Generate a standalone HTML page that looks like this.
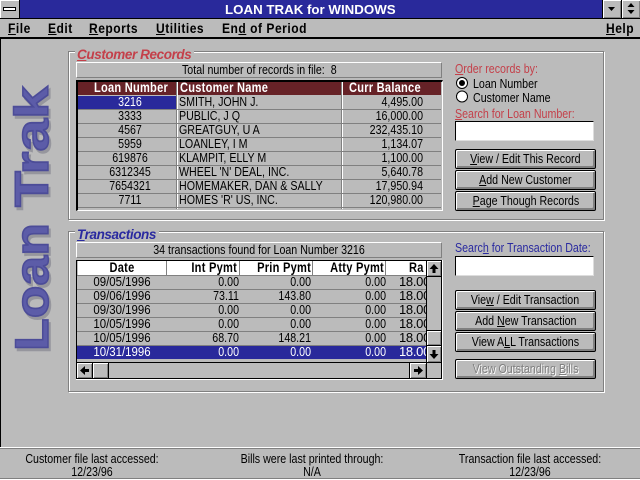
<!DOCTYPE html>
<html><head><meta charset="utf-8"><title>LOAN TRAK for WINDOWS</title>
<style>
html,body{margin:0;padding:0;background:#bbb}
#p{position:relative;width:640px;height:480px;overflow:hidden;background:#bbb;font:13px/14px "Liberation Sans",sans-serif;color:#000}
#p div{position:absolute;box-sizing:border-box;white-space:nowrap}
.m{top:20px;font:bold 14px/16px "Liberation Sans",sans-serif;letter-spacing:.6px;transform:scaleX(.86);transform-origin:0 0}
.group{border:1px solid #808080;box-shadow:1px 1px 0 #fff,inset 1px 1px 0 #fff}
.leg{font:italic bold 13.5px/14px "Liberation Sans",sans-serif;background:#bbb;padding:0 3px 0 2px;letter-spacing:-.4px}
.info{left:76px;width:366px;height:16px;border:1px solid;border-color:#fff #808080 #808080 #fff;text-align:center;line-height:14px}
.btn{left:455px;width:141px;height:20px;border:1px solid #000;border-radius:2px;background:#bbb;box-shadow:inset 1px 1px 0 #fff,inset -2px -2px 0 #808080;text-align:center;line-height:18px}
.s{display:inline-block;transform:scaleX(.82)}
.inp{left:455px;width:139px;height:20px;background:#fff;border:1px solid;border-color:#000 #ddd #ddd #000}
.h{font:bold 13.5px/14px "Liberation Sans",sans-serif;letter-spacing:.3px}
.l{transform:scaleX(.82);transform-origin:0 0}
.c{text-align:center;transform:scaleX(.82)}
.d{text-align:center;transform:scaleX(.88)}
.r{text-align:right;transform:scaleX(.82);transform-origin:100% 0}
.sb{background:#bbb;box-shadow:inset 1px 1px 0 #fff,inset -1px -1px 0 #808080}
.rl{height:1px;background:#808080}
.k{background:#000}
.red{color:#c4404a}.blue{color:#2a2aa0}
</style></head><body><div id="p">

<!-- title bar -->
<div style="left:0;top:0;width:640px;height:18px;background:#29299b"></div>
<div style="left:0;top:18px;width:640px;height:1px;background:#000"></div>
<div style="left:0;top:0;width:19px;height:18px;background:#bbb;box-shadow:inset 1px 1px 0 #fff"></div>
<div style="left:19px;top:0;width:1px;height:18px;background:#000"></div>
<div style="left:3px;top:7px;width:13px;height:4px;background:#fff;border:1px solid #000"></div>
<div style="left:225px;top:1px;width:170px;text-align:center;font:bold 13.300px/17px 'Liberation Sans',sans-serif;color:#fff">LOAN TRAK for WINDOWS</div>
<div style="left:602px;top:0;width:1px;height:18px;background:#000"></div>
<div style="left:603px;top:0;width:18px;height:18px;background:#bbb;box-shadow:inset 1px 1px 0 #fff,inset -1px -1px 0 #808080"></div>
<div style="left:621px;top:0;width:1px;height:18px;background:#000"></div>
<div style="left:622px;top:0;width:18px;height:18px;background:#bbb;box-shadow:inset 1px 1px 0 #fff,inset -1px -1px 0 #808080"></div>
<svg style="position:absolute;left:603px;top:0" width="37" height="18"><path d="M5 7h7l-3.500 4zM28 3l3.500 4h-7zM24.500 10h7l-3.500 4z" fill="#000"/></svg>

<!-- menu -->
<div class="m" style="left:8px"><u>F</u>ile</div>
<div class="m" style="left:48px"><u>E</u>dit</div>
<div class="m" style="left:89px"><u>R</u>eports</div>
<div class="m" style="left:156px"><u>U</u>tilities</div>
<div class="m" style="left:222px">En<u>d</u> of Period</div>
<div class="m" style="left:606px"><u>H</u>elp</div>
<div style="left:0;top:37px;width:640px;height:2px;background:#000"></div>
<div style="left:0;top:39px;width:1px;height:408px;background:#000"></div>

<!-- logo -->
<svg style="position:absolute;left:0;top:70px" width="66" height="300" font-family="Liberation Sans" font-weight="bold" font-size="47" stroke-width="1.500"><g fill="#8a8a94" stroke="#8a8a94" opacity=".75"><text transform="translate(50 284) rotate(-90) scale(1.140 1)">Loan</text><text transform="translate(50 140) rotate(-90) scale(1.250 1)">Trak</text></g><g fill="#5c5ca8" stroke="#4c4c98"><text transform="translate(48 281) rotate(-90) scale(1.140 1)">Loan</text><text transform="translate(48 137) rotate(-90) scale(1.250 1)">Trak</text></g></svg>

<!-- customer group -->
<div class="group" style="left:68px;top:51px;width:536px;height:169px"></div>
<div class="leg red" style="left:75px;top:48px"><u>C</u>ustomer Records</div>
<div class="info" style="top:62px"><span class="s">Total number of records in file:&nbsp; 8</span></div>

<div style="left:76px;top:80px;width:367px;height:131px;background:#bbb;border-left:2px solid #000;border-top:2px solid #000;border-right:1px solid #fff;border-bottom:1px solid #fff"></div>
<div style="left:78px;top:82px;width:363px;height:13px;background:#662227"></div>
<div style="left:176px;top:82px;width:1px;height:127px;background:#808080"></div><div style="left:177px;top:82px;width:1px;height:127px;background:#fff"></div>
<div style="left:341px;top:82px;width:1px;height:127px;background:#808080"></div><div style="left:342px;top:82px;width:1px;height:127px;background:#fff"></div>
<div class="h c" style="left:82px;top:81px;width:98px;color:#fff">Loan Number</div>
<div class="h l" style="left:180px;top:81px;color:#fff">Customer Name</div>
<div class="h l" style="left:349px;top:81px;color:#fff">Curr Balance</div>
<div style="left:78px;top:96px;width:98px;height:13px;background:#29299b"></div>
<div class="rl" style="left:78px;top:109px;width:363px"></div><div class="rl" style="left:78px;top:123px;width:363px"></div><div class="rl" style="left:78px;top:137px;width:363px"></div><div class="rl" style="left:78px;top:151px;width:363px"></div><div class="rl" style="left:78px;top:165px;width:363px"></div><div class="rl" style="left:78px;top:179px;width:363px"></div><div class="rl" style="left:78px;top:193px;width:363px"></div><div class="rl" style="left:78px;top:207px;width:363px"></div>

<div class="c" style="left:81px;top:95px;width:98px;color:#fff">3216</div><div class="l" style="left:179px;top:95px">SMITH, JOHN J.</div><div class="r" style="left:343px;top:95px;width:80px">4,495.00</div>
<div class="c" style="left:81px;top:109px;width:98px">3333</div><div class="l" style="left:179px;top:109px">PUBLIC, J Q</div><div class="r" style="left:343px;top:109px;width:80px">16,000.00</div>
<div class="c" style="left:81px;top:123px;width:98px">4567</div><div class="l" style="left:179px;top:123px">GREATGUY, U A</div><div class="r" style="left:343px;top:123px;width:80px">232,435.10</div>
<div class="c" style="left:81px;top:137px;width:98px">5959</div><div class="l" style="left:179px;top:137px">LOANLEY, I M</div><div class="r" style="left:343px;top:137px;width:80px">1,134.07</div>
<div class="c" style="left:81px;top:151px;width:98px">619876</div><div class="l" style="left:179px;top:151px">KLAMPIT, ELLY M</div><div class="r" style="left:343px;top:151px;width:80px">1,100.00</div>
<div class="c" style="left:81px;top:165px;width:98px">6312345</div><div class="l" style="left:179px;top:165px">WHEEL 'N' DEAL, INC.</div><div class="r" style="left:343px;top:165px;width:80px">5,640.78</div>
<div class="c" style="left:81px;top:179px;width:98px">7654321</div><div class="l" style="left:179px;top:179px">HOMEMAKER, DAN &amp; SALLY</div><div class="r" style="left:343px;top:179px;width:80px">17,950.94</div>
<div class="c" style="left:81px;top:193px;width:98px">7711</div><div class="l" style="left:179px;top:193px">HOMES 'R' US, INC.</div><div class="r" style="left:343px;top:193px;width:80px">120,980.00</div>

<!-- right side customers -->
<div class="red l" style="left:455px;top:62px"><u>O</u>rder records by:</div>
<svg style="position:absolute;left:455px;top:75px" width="15" height="30"><circle cx="7" cy="8" r="5.500" fill="#fff" stroke="#000"/><circle cx="7" cy="8" r="3" fill="#000"/><circle cx="7" cy="21.500" r="5.500" fill="#fff" stroke="#000"/></svg>
<div class="l" style="left:473px;top:77px">Loan Number</div>
<div class="l" style="left:473px;top:91px">Customer Name</div>
<div class="red l" style="left:455px;top:107px"><u>S</u>earch for Loan Number:</div>
<div class="inp" style="top:121px"></div>
<div class="btn" style="top:149px"><span class="s"><u>V</u>iew / Edit This Record</span></div>
<div class="btn" style="top:170px"><span class="s"><u>A</u>dd New Customer</span></div>
<div class="btn" style="top:191px"><span class="s"><u>P</u>age Though Records</span></div>

<!-- transactions group -->
<div class="group" style="left:68px;top:231px;width:536px;height:161px"></div>
<div class="leg blue" style="left:75px;top:228px"><u>T</u>ransactions</div>
<div class="info" style="top:242px"><span class="s">34 transactions found for Loan Number 3216</span></div>

<div style="left:76px;top:260px;width:367px;height:120px;background:#bbb;border-right:1px solid #fff;border-bottom:1px solid #fff"></div>
<div class="k" style="left:76px;top:260px;width:366px;height:1px"></div>
<div class="k" style="left:76px;top:260px;width:1px;height:119px"></div>
<div class="k" style="left:441px;top:260px;width:1px;height:119px"></div>
<div class="k" style="left:76px;top:378px;width:366px;height:1px"></div>
<div style="left:78px;top:261px;width:348px;height:14px;background:#fff"></div>
<div class="rl" style="left:77px;top:275px;width:349px"></div>
<div style="left:166px;top:261px;width:1px;height:14px;background:#808080"></div><div style="left:239px;top:261px;width:1px;height:14px;background:#808080"></div><div style="left:312px;top:261px;width:1px;height:14px;background:#808080"></div><div style="left:385px;top:261px;width:1px;height:14px;background:#808080"></div>
<div class="h c" style="left:78px;top:261px;width:88px">Date</div>
<div class="h r" style="left:168px;top:261px;width:69px">Int Pymt</div>
<div class="h r" style="left:241px;top:261px;width:70px">Prin Pymt</div>
<div class="h r" style="left:314px;top:261px;width:70px">Atty Pymt</div>
<div class="h l" style="left:409px;top:261px">Ra</div>

<div style="left:77px;top:346px;width:349px;height:13px;background:#29299b"></div>
<div class="rl" style="left:77px;top:289px;width:349px"></div><div class="rl" style="left:77px;top:303px;width:349px"></div><div class="rl" style="left:77px;top:317px;width:349px"></div><div class="rl" style="left:77px;top:331px;width:349px"></div><div class="rl" style="left:77px;top:345px;width:349px"></div>

<div class="d" style="left:78px;top:275px;width:88px">09/05/1996</div><div class="r" style="left:168px;top:275px;width:71px">0.00</div><div class="r" style="left:241px;top:275px;width:70px">0.00</div><div class="r" style="left:314px;top:275px;width:72px">0.00</div><div style="left:399px;top:275px;width:27px;overflow:hidden;letter-spacing:-.3px">18.00</div>
<div class="d" style="left:78px;top:289px;width:88px">09/06/1996</div><div class="r" style="left:168px;top:289px;width:71px">73.11</div><div class="r" style="left:241px;top:289px;width:70px">143.80</div><div class="r" style="left:314px;top:289px;width:72px">0.00</div><div style="left:399px;top:289px;width:27px;overflow:hidden;letter-spacing:-.3px">18.00</div>
<div class="d" style="left:78px;top:303px;width:88px">09/30/1996</div><div class="r" style="left:168px;top:303px;width:71px">0.00</div><div class="r" style="left:241px;top:303px;width:70px">0.00</div><div class="r" style="left:314px;top:303px;width:72px">0.00</div><div style="left:399px;top:303px;width:27px;overflow:hidden;letter-spacing:-.3px">18.00</div>
<div class="d" style="left:78px;top:317px;width:88px">10/05/1996</div><div class="r" style="left:168px;top:317px;width:71px">0.00</div><div class="r" style="left:241px;top:317px;width:70px">0.00</div><div class="r" style="left:314px;top:317px;width:72px">0.00</div><div style="left:399px;top:317px;width:27px;overflow:hidden;letter-spacing:-.3px">18.00</div>
<div class="d" style="left:78px;top:331px;width:88px">10/05/1996</div><div class="r" style="left:168px;top:331px;width:71px">68.70</div><div class="r" style="left:241px;top:331px;width:70px">148.21</div><div class="r" style="left:314px;top:331px;width:72px">0.00</div><div style="left:399px;top:331px;width:27px;overflow:hidden;letter-spacing:-.3px">18.00</div>
<div class="d" style="left:78px;top:345px;width:88px;color:#fff">10/31/1996</div><div class="r" style="left:168px;top:345px;width:71px;color:#fff">0.00</div><div class="r" style="left:241px;top:345px;width:70px;color:#fff">0.00</div><div class="r" style="left:314px;top:345px;width:72px;color:#fff">0.00</div><div style="left:399px;top:345px;width:27px;overflow:hidden;letter-spacing:-.3px;color:#fff">18.00</div>

<!-- scrollbars -->
<div style="left:77px;top:359px;width:349px;height:3px;background:#bbb"></div>
<div class="k" style="left:77px;top:362px;width:364px;height:1px"></div>
<div class="k" style="left:426px;top:261px;width:1px;height:117px"></div>
<div style="left:427px;top:261px;width:14px;height:101px;background:#bbb"></div>
<div class="sb" style="left:427px;top:261px;width:14px;height:15px"></div>
<div class="k" style="left:427px;top:276px;width:14px;height:1px"></div>
<div class="k" style="left:427px;top:330px;width:14px;height:1px"></div>
<div class="sb" style="left:427px;top:331px;width:14px;height:14px"></div>
<div class="k" style="left:427px;top:345px;width:14px;height:1px"></div>
<div class="sb" style="left:427px;top:346px;width:14px;height:16px"></div>
<div class="sb" style="left:77px;top:363px;width:15px;height:15px"></div>
<div class="k" style="left:92px;top:363px;width:1px;height:15px"></div>
<div class="sb" style="left:93px;top:363px;width:15px;height:15px"></div>
<div class="k" style="left:108px;top:363px;width:1px;height:15px"></div>
<div class="k" style="left:409px;top:363px;width:1px;height:15px"></div>
<div class="sb" style="left:410px;top:363px;width:16px;height:15px"></div>
<svg style="position:absolute;left:0;top:0" width="640" height="480"><path d="M434 264l4.500 5h-3v4h-3v-4h-3zM434 359l4.500-5h-3v-4h-3v4h-3zM80 370.500l5-4.500v3h4v3h-4v3zM423 370.500l-5-4.500v3h-4v3h4v3z" fill="#000"/></svg>

<!-- right side transactions -->
<div class="blue l" style="left:455px;top:241px">Searc<u>h</u> for Transaction Date:</div>
<div class="inp" style="top:256px"></div>
<div class="btn" style="top:290px"><span class="s">Vie<u>w</u> / Edit Transaction</span></div>
<div class="btn" style="top:311px"><span class="s">Add <u>N</u>ew Transaction</span></div>
<div class="btn" style="top:332px"><span class="s">View A<u>L</u>L Transactions</span></div>
<div class="btn" style="top:359px;color:#808080;text-shadow:1px 1px 0 #fff"><span class="s">View Outstanding <u>B</u>ills</span></div>

<!-- status -->
<div style="left:0;top:447px;width:640px;height:1px;background:#fff"></div>
<div style="left:0;top:448px;width:640px;height:1px;background:#808080"></div>
<div style="left:0;top:478px;width:640px;height:1px;background:#808080"></div>
<div style="left:0;top:479px;width:640px;height:1px;background:#fff"></div>
<div class="c" style="left:0;top:452px;width:184px;line-height:13px">Customer file last accessed:<br>12/23/96</div>
<div class="c" style="left:212px;top:452px;width:200px;line-height:13px">Bills were last printed through:<br>N/A</div>
<div class="c" style="left:430px;top:452px;width:200px;line-height:13px">Transaction file last accessed:<br>12/23/96</div>
</div></body></html>
